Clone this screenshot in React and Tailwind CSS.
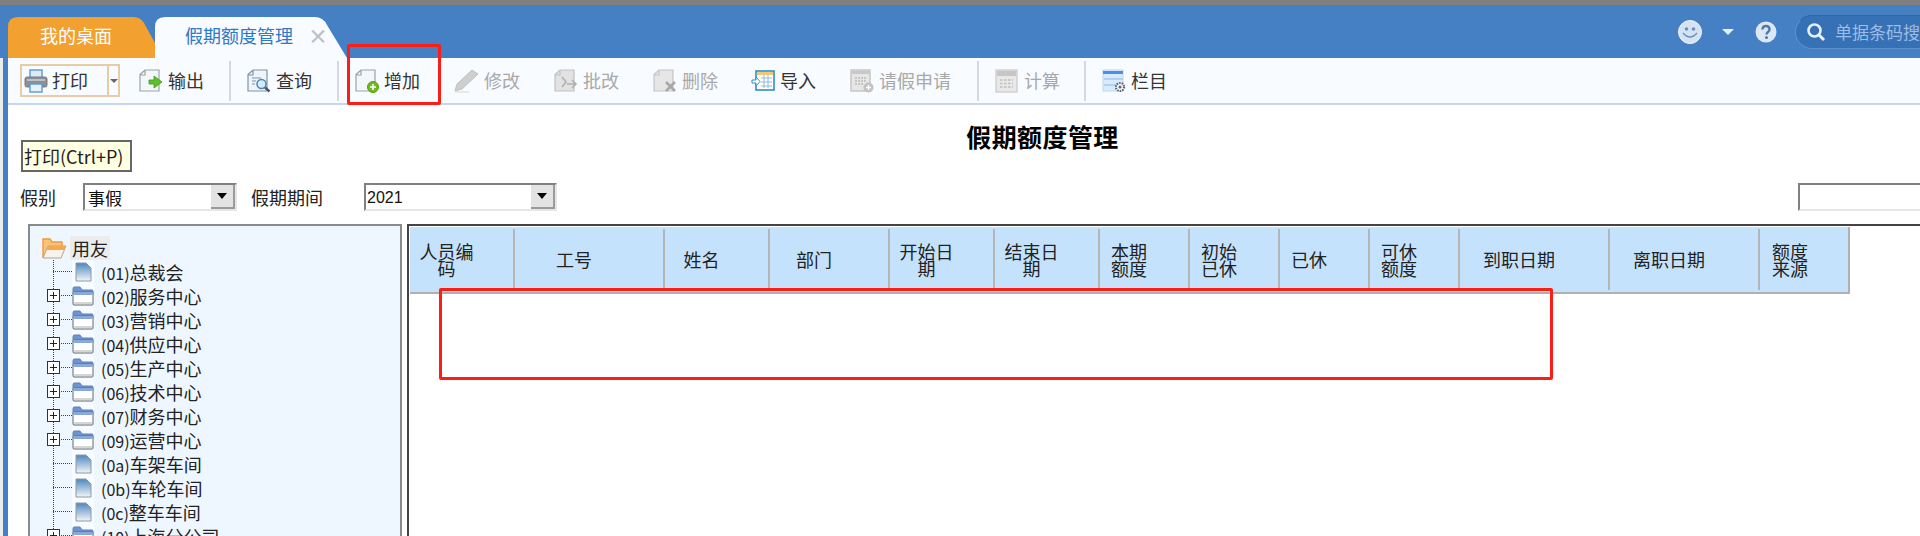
import React from 'react';

const DocBase = ({ fill = '#f4f7fa', stroke = '#9aa3ab' }) => (
  <path d="M1 5.500 6 1h14v21H1z M6 1v5H1" fill={fill} stroke={stroke} strokeWidth="1.2" />
);

const PrinterIcon = () => (
  <svg width="24" height="24" viewBox="0 0 24 24">
    <rect x="6" y="1" width="12" height="8" fill="#dcecf8" stroke="#5a9bd0" strokeWidth="1.4" />
    <rect x="1" y="8" width="22" height="10" rx="2" fill="#8a9097" stroke="#777d83" />
    <rect x="3" y="10" width="18" height="2" fill="#bcc1c5" />
    <rect x="6" y="15" width="12" height="8" fill="#e8f2fa" stroke="#5a9bd0" strokeWidth="1.4" />
  </svg>
);

const ExportIcon = () => (
  <svg width="24" height="24" viewBox="0 0 24 24">
    <DocBase />
    <path d="M10 11h5V7l8 6-8 6v-4h-5z" fill="#5cc02e" stroke="#3c9a1c" strokeWidth="0.8" />
  </svg>
);

const QueryIcon = () => (
  <svg width="24" height="24" viewBox="0 0 24 24">
    <DocBase fill="#eef4f9" stroke="#7d95ab" />
    <path d="M5 9h9M5 12h4M5 15h3" stroke="#7d95ab" />
    <circle cx="14.5" cy="15" r="4.5" fill="#d5ecfa" stroke="#4a86b8" strokeWidth="1.5" />
    <path d="m18 18.5 4.5 4" stroke="#4b5a68" strokeWidth="2.4" />
  </svg>
);

const AddIcon = () => (
  <svg width="24" height="24" viewBox="0 0 24 24">
    <DocBase />
    <circle cx="18" cy="18" r="5.5" fill="#71b81e" stroke="#5b9b12" />
    <path d="M15 18h6M18 15v6" stroke="#fff" strokeWidth="1.6" />
  </svg>
);

const PencilIcon = () => (
  <svg width="25" height="24" viewBox="0 0 25 24">
    <path d="M18 1 24 5 8 20 1 22l2-7z" fill="#cfcfcf" stroke="#c0c0c0" />
    <path d="M1 23h14" stroke="#e2e2e2" strokeWidth="1.5" />
  </svg>
);

const ApproveIcon = () => (
  <svg width="24" height="24" viewBox="0 0 24 24">
    <DocBase fill="#e2e2e2" stroke="#c2c2c2" />
    <path d="M8 8l4 5-4 5M13 15h9M18 11l4 4-4 4" fill="none" stroke="#b0b0b0" strokeWidth="1.6" />
  </svg>
);

const DeleteIcon = () => (
  <svg width="24" height="24" viewBox="0 0 24 24">
    <DocBase fill="#e6e6e6" stroke="#c6c6c6" />
    <path d="m13 13 9 9M22 13l-9 9" stroke="#a8a8a8" strokeWidth="2.6" />
  </svg>
);

const ImportIcon = () => (
  <svg width="24" height="24" viewBox="0 0 24 24">
    <rect x="5" y="2" width="18" height="19" fill="#fff" stroke="#2f8fc4" strokeWidth="1.6" />
    <rect x="6" y="3" width="16" height="3" fill="#f0c878" />
    <path d="M10 9h11M10 13h11M10 17h11M13 6v13M17 6v13" stroke="#8cbbe0" />
    <path d="M1 11h4V8l4 4.5L5 17v-3H1z" fill="#fff" stroke="#2f8fc4" />
  </svg>
);

const LeaveIcon = () => (
  <svg width="24" height="24" viewBox="0 0 24 24">
    <rect x="1" y="1" width="19" height="21" fill="#e6e6e6" stroke="#c4c4c4" strokeWidth="1.4" />
    <rect x="2" y="2" width="17" height="3" fill="#c8c8c8" />
    <path d="M5 9h12M5 12h12M5 15h9" stroke="#bcbcbc" strokeWidth="1.4" strokeDasharray="2 1" />
    <circle cx="18.5" cy="18.5" r="5" fill="#c2c2c2" />
    <path d="M16 18.500h5M18.500 16v5" stroke="#fff" strokeWidth="1.4" />
  </svg>
);

const CalcIcon = () => (
  <svg width="24" height="24" viewBox="0 0 24 24">
    <rect x="1" y="1" width="21" height="22" fill="#e8e8e8" stroke="#cfcfcf" strokeWidth="1.4" />
    <rect x="2" y="2" width="19" height="5" fill="#c6c6c6" />
    <path d="M5 11h13M5 14.500h13M5 18h13" stroke="#bdbdbd" strokeWidth="1.6" strokeDasharray="2.500 1.500" />
  </svg>
);

const ColumnIcon = () => (
  <svg width="24" height="24" viewBox="0 0 24 24">
    <rect x="1" y="1" width="20" height="21" fill="#d8eafc" stroke="#bcd8f4" />
    <rect x="1" y="2" width="20" height="3" fill="#4a90e2" />
    <path d="M2 10h19M2 16h13" stroke="#8ab8e8" />
    <circle cx="18" cy="18" r="4" fill="#fff" stroke="#5b6670" strokeWidth="2.200" strokeDasharray="1.500 1" />
    <circle cx="18" cy="18" r="1.500" fill="#5b6670" />
  </svg>
);

const FolderOpenIcon = () => (
  <svg width="26" height="24" viewBox="0 0 26 24">
    <path d="M2 22V3h7l2 3h10v4" fill="#fbc27a" stroke="#ef9a3a" strokeWidth="1.400" />
    <path d="M2 22 7 10h18l-5 12z" fill="#f7f2ea" stroke="#b8a48c" />
    <path d="M7 10h18l-2 4H5z" fill="#f5a94e" />
  </svg>
);

const FolderIcon = () => (
  <svg width="22" height="20" viewBox="0 0 22 20">
    <path d="M1 6V2.500Q1 1 2.500 1H8l2 3h10q1 0 1 1v3H1z" fill="#6f95cf" stroke="#5a80bc" />
    <rect x="1" y="6" width="20" height="13" rx="1" fill="#fff" stroke="#5b6670" />
    <rect x="1.500" y="6" width="19" height="3" fill="#8aa9d8" />
    <path d="M2 17h18" stroke="#c8c8c8" strokeWidth="1.500" />
  </svg>
);

const FileIcon = () => (
  <svg width="18" height="20" viewBox="0 0 18 20">
    <defs>
      <linearGradient id="fileFill" x1="0" y1="0" x2="0" y2="1">
        <stop offset="0" stopColor="#4f87c0" />
        <stop offset="1" stopColor="#f2f5f8" />
      </linearGradient>
    </defs>
    <path d="M2 1h10l5 5v13H2z" fill="url(#fileFill)" stroke="#8d99a5" />
  </svg>
);

// dotted tree lines, 42px wide, drawn per row so the rows stay in flow
const TreeLines = ({ expandable }) => (
  <svg width="42" height="24" viewBox="0 0 42 24" className="shrink-0">
    <path d="M23.500 0v24" stroke="#444" strokeDasharray="1 1" />
    <path d="M23 11.500h19" stroke="#444" strokeDasharray="1 1" />
    {expandable && (
      <>
        <rect x="17.500" y="5.500" width="12" height="12" fill="#fff" stroke="#333" />
        <path d="M20 11.500h7M23.500 8v7" stroke="#222" />
      </>
    )}
  </svg>
);

const ToolItem = ({ icon, label, disabled, className }) => (
  <div className={`flex items-center gap-[5px] shrink-0 ${className}`}>
    {icon}
    <span className={disabled ? 'text-[#a9a9a9]' : 'text-[#333333]'}>{label}</span>
  </div>
);

const Sep = ({ className }) => <div className={`w-[2px] h-[40px] bg-[#d5d9dd] shrink-0 ${className}`} />;

const SelectBox = ({ value, className, textClass }) => (
  <div className={`h-[28px] flex border-2 border-t-[#808080] border-l-[#808080] border-b-[#e6e6e6] border-r-[#e6e6e6] bg-white shrink-0 ${className}`}>
    <span className={`flex-1 leading-[26px] text-[#111] ${textClass}`}>{value}</span>
    <div className="w-[24px] bg-[#e3e3e3] border-r-2 border-b-2 border-[#9a9a9a] flex items-center justify-center">
      <div className="w-0 h-0 border-x-[5px] border-x-transparent border-t-[6px] border-t-black" />
    </div>
  </div>
);

const treeRows = [
  { code: '(01)', name: '总裁会' },
  { code: '(02)', name: '服务中心', folder: true },
  { code: '(03)', name: '营销中心', folder: true },
  { code: '(04)', name: '供应中心', folder: true },
  { code: '(05)', name: '生产中心', folder: true },
  { code: '(06)', name: '技术中心', folder: true },
  { code: '(07)', name: '财务中心', folder: true },
  { code: '(09)', name: '运营中心', folder: true },
  { code: '(0a)', name: '车架车间' },
  { code: '(0b)', name: '车轮车间' },
  { code: '(0c)', name: '整车车间' },
  { code: '(10)', name: '上海分公司', folder: true },
];

const columns = [
  { width: 'w-[105px]', lines: ['人员编', '码'] },
  { width: 'w-[150px]', lines: ['工号'] },
  { width: 'w-[105px]', lines: ['姓名'] },
  { width: 'w-[120px]', lines: ['部门'] },
  { width: 'w-[105px]', lines: ['开始日', '期'] },
  { width: 'w-[105px]', lines: ['结束日', '期'] },
  { width: 'w-[90px]', lines: ['本期', '额度'] },
  { width: 'w-[90px]', lines: ['初始', '已休'] },
  { width: 'w-[90px]', lines: ['已休'] },
  { width: 'w-[90px]', lines: ['可休', '额度'] },
  { width: 'w-[150px]', lines: ['到职日期'] },
  { width: 'w-[150px]', lines: ['离职日期'] },
  { width: 'w-[90px]', lines: ['额度', '来源'] },
];

const App = () => {
  return (
    <div className="relative w-[1920px] h-[536px] overflow-hidden bg-white flex flex-col text-[18px] font-['Noto_Sans_CJK_SC','Noto_Sans',sans-serif]">
      {/* Window edge */}
      <div className="h-[5px] bg-[#7f7f7f] shrink-0" />

      {/* Header with tabs */}
      <div className="h-[53px] bg-[#4580c5] flex shrink-0">
        <div className="ml-[8px] mt-[12px] h-[41px] w-[147px] bg-[#f2a030] text-white leading-[37px] pl-[32px] shrink-0 [clip-path:path('M0,41L0,10Q0,0,10,0L126,0Q132,0,136,6L147,26L147,41Z')]">
          我的桌面
        </div>
        <div className="mt-[12px] h-[41px] w-[192px] bg-[#f8fbff] text-[#2b79c9] leading-[37px] pl-[30px] flex shrink-0 [clip-path:path('M0,41L0,10Q0,0,10,0L160,0Q168,0,172,8L192,41Z')]">
          <span>假期额度管理</span>
          <span className="ml-[15px] text-[#b6c2cb] font-bold text-[20px]">×</span>
        </div>
        <div className="flex-1" />
        <div className="w-[242px] flex items-center overflow-hidden shrink-0">
          <svg width="24" height="24" viewBox="0 0 24 24" className="shrink-0">
            <circle cx="12" cy="12" r="11.500" fill="#d5e2f1" stroke="#eef4fa" />
            <circle cx="8.500" cy="9" r="1.800" fill="#6b8fbb" />
            <circle cx="15.500" cy="9" r="1.800" fill="#6b8fbb" />
            <path d="M5 13q7 8 14 0" fill="none" stroke="#6b8fbb" strokeWidth="1.500" />
          </svg>
          <div className="ml-[20px] w-0 h-0 shrink-0 border-x-[6px] border-x-transparent border-t-[6px] border-t-[#e6eef8]" />
          <svg width="22" height="22" viewBox="0 0 22 22" className="ml-[21px] shrink-0">
            <circle cx="11" cy="11" r="10.500" fill="#dce7f4" />
            <path d="M7.500 8.500Q7.500 5 11 5t3.500 3.500c0 2.500-3 2.500-3 5" fill="none" stroke="#4f78aa" strokeWidth="2.400" />
            <circle cx="11.500" cy="16.500" r="1.500" fill="#4f78aa" />
          </svg>
          <div className="ml-[18px] w-[140px] h-[34px] shrink-0 rounded-l-full bg-[#3670b5] border border-[#5c8fcc] border-t-[#2f66a8] flex items-center pl-[10px]">
            <svg width="20" height="20" viewBox="0 0 20 20" className="shrink-0">
              <circle cx="8.500" cy="8.500" r="6" fill="none" stroke="#e8f0fa" strokeWidth="2.600" />
              <path d="m13 13 5 5" stroke="#e8f0fa" strokeWidth="3" />
            </svg>
            <span className="ml-[9px] text-[#9bbde6] text-[17px] whitespace-nowrap">单据条码搜索</span>
          </div>
        </div>
      </div>

      <div className="flex-1 flex min-h-0">
        {/* Left window edge */}
        <div className="w-[3px] bg-[#ececec] shrink-0" />
        <div className="w-[5px] bg-[#4580c5] shrink-0" />

        <div className="flex-1 flex flex-col min-w-0">
          {/* Toolbar */}
          <div className="h-[47px] bg-[#f8fbff] border-b-2 border-[#c7d6ea] flex items-center shrink-0">
            <div className="ml-[12px] w-[100px] h-[33px] border-2 border-[#e6cda6] flex items-center shrink-0">
              <div className="ml-[2px] flex items-center gap-[4px] text-[#333333] w-[83px]">
                <PrinterIcon />
                <span>打印</span>
              </div>
              <div className="h-full flex-1 border-l-2 border-[#e6cda6] flex items-center justify-center">
                <div className="w-0 h-0 border-x-[4px] border-x-transparent border-t-[4px] border-t-[#666]" />
              </div>
            </div>
            <ToolItem icon={<ExportIcon />} label="输出" className="ml-[19px]" />
            <Sep className="ml-[25px]" />
            <ToolItem icon={<QueryIcon />} label="查询" className="ml-[16px]" />
            <Sep className="ml-[25px]" />
            <ToolItem icon={<AddIcon />} label="增加" className="ml-[16px]" />
            <ToolItem icon={<PencilIcon />} label="修改" disabled className="ml-[34px]" />
            <ToolItem icon={<ApproveIcon />} label="批改" disabled className="ml-[34px]" />
            <ToolItem icon={<DeleteIcon />} label="删除" disabled className="ml-[34px]" />
            <ToolItem icon={<ImportIcon />} label="导入" className="ml-[33px]" />
            <ToolItem icon={<LeaveIcon />} label="请假申请" disabled className="ml-[34px]" />
            <Sep className="ml-[26px]" />
            <ToolItem icon={<CalcIcon />} label="计算" disabled className="ml-[16px]" />
            <Sep className="ml-[24px]" />
            <ToolItem icon={<ColumnIcon />} label="栏目" className="ml-[16px]" />
          </div>

          {/* Title */}
          <div className="pt-[18px] pl-[157px] flex justify-center shrink-0">
            <h1 className="font-bold text-[25px] tracking-[0.4px] leading-[26px] text-black">假期额度管理</h1>
          </div>

          {/* Filters */}
          <div className="mt-[34px] h-[28px] flex items-center pl-[12px] text-[#222] shrink-0">
            <span className="w-[63px] shrink-0">假别</span>
            <SelectBox value="事假" className="w-[154px]" textClass="pl-[3px] text-[17px]" />
            <span className="ml-[14px] w-[113px] shrink-0">假期期间</span>
            <SelectBox value="2021" className="w-[193px]" textClass="pl-[1px] text-[16px] font-['Liberation_Sans',sans-serif]" />
            <div className="ml-auto w-[122px] h-[28px] border-2 border-t-[#808080] border-l-[#808080] border-b-[#e6e6e6] border-r-0 bg-white" />
          </div>

          {/* Tree and table */}
          <div className="mt-[13px] flex-1 flex min-h-0 pl-[20px]">
            <div className="w-[374px] shrink-0 bg-[#eef6ff] border-2 border-b-0 border-[#8a8a8a] pt-[10px] overflow-hidden text-[#222]">
              <div className="h-6 flex items-center pl-[11px]">
                <FolderOpenIcon />
                <span className="ml-[3px] px-[2px] bg-[#ececec] leading-[24px]">用友</span>
              </div>
              {treeRows.map(row => (
                <div key={row.code} className="h-6 flex items-center">
                  <TreeLines expandable={row.folder} />
                  <div className="w-[22px] h-6 flex items-center justify-center bg-[#f8fbff] shrink-0">
                    {row.folder ? <FolderIcon /> : <FileIcon />}
                  </div>
                  <span className="ml-[7px] leading-[24px] whitespace-nowrap">
                    <span className="text-[16px]">{row.code}</span>{row.name}
                  </span>
                </div>
              ))}
            </div>

            <div className="ml-[5px] flex-1 min-w-0 border-t-2 border-l-2 border-[#444] pl-[1px] pt-[1px]">
              <div className="w-[1440px] h-[67px] flex bg-[#c5e2fd] border-b-2 border-r-2 border-[#b0b0b0] text-[#222]">
                {columns.map(col => (
                  <div
                    key={col.lines.join('')}
                    className={`${col.width} shrink-0 my-[2px] border-r-2 border-[#b5b5b5] last:border-r-0 pr-[30px] flex flex-col items-center justify-center leading-[17px]`}
                  >
                    {col.lines.map(line => (
                      <span key={line} className="whitespace-nowrap">{line}</span>
                    ))}
                  </div>
                ))}
              </div>
            </div>
          </div>
        </div>
      </div>

      {/* Tooltip over the page */}
      <div className="absolute left-[21px] top-[140px] w-[111px] h-[32px] bg-[#ffffe1] border-2 border-[#666] text-[18px] leading-[28px] pl-[1px] text-[#222] whitespace-nowrap">
        打印(Ctrl+P)
      </div>

      {/* Red annotation boxes */}
      <div className="absolute left-[347px] top-[44px] w-[94px] h-[61px] border-[3px] border-[#fa1e14] rounded-[2px]" />
      <div className="absolute left-[439px] top-[288px] w-[1114px] h-[92px] border-[3px] border-[#fa1e14] rounded-[2px]" />
    </div>
  );
};

export default App;
